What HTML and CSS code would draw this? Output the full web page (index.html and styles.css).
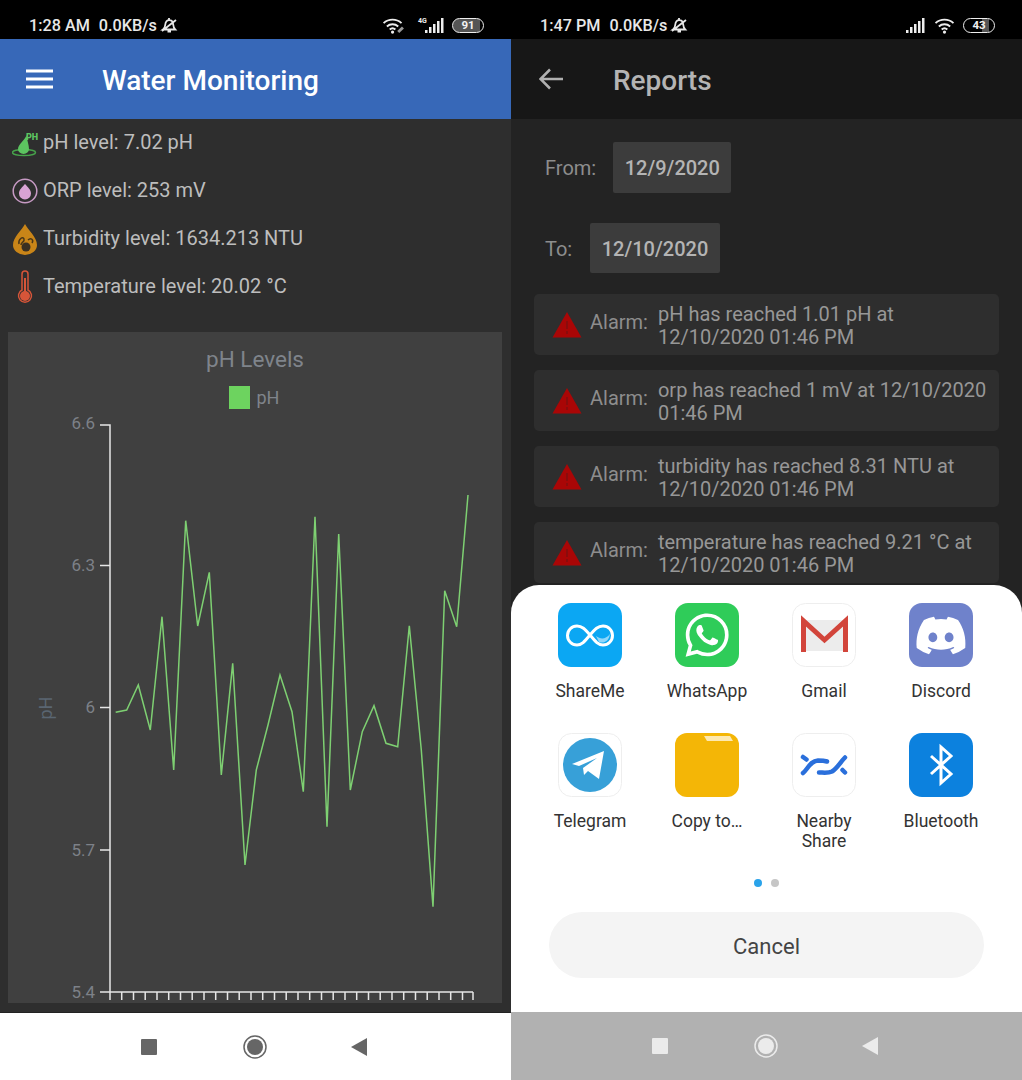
FILE: index.html
```html
<!DOCTYPE html>
<html>
  <head>
    <meta charset="UTF-8" />
    <title>Water Monitoring</title>
    <link rel="stylesheet" href="styles.css">
  </head>
  <body>
    <div class="screens">
      <!-- left phone: live readings -->
      <section class="phone">
        <div class="status-bar">
          <span class="status-time">1:28 AM</span>
          <span class="status-speed">0.0KB/s</span>
          <svg class="bell" viewBox="0 0 18 18"><path d="M3 13.5c1.5-1 2-2.5 2.2-4.5.3-3 1.800-4.800 4-4.800s3.800 1.600 4 4.300c.2 2.200.8 3.800 2 5zM7.500 15.500h3.500M9 2v2M2 15 16 4" /></svg>
          <div class="status-right">
            <svg class="wifi wifi-left" viewBox="0 0 24 18"><path d="M1.500 6.500a14 14 0 0 1 19 0M5 10a9 9 0 0 1 12 0M8 13.200a4.500 4.500 0 0 1 6 0" /><circle cx="11" cy="16" r="1.700" class="fill" /><path class="thin" d="M17 16l5-5" /></svg>
            <svg class="signal-4g" viewBox="0 0 27 17"><text x="1" y="6" class="tiny">4G</text><rect x="8" y="13" width="2.500" height="3" /><rect x="12" y="10" width="2.500" height="6" /><rect x="16" y="7" width="2.500" height="9" /><rect x="20" y="4" width="2.500" height="12" /><rect x="24" y="1" width="2.500" height="15" /></svg>
            <span class="battery">91</span>
          </div>
        </div>
        <header class="app-bar app-bar-blue">
          <svg class="menu-icon" viewBox="0 0 27 20"><path d="M0 2h27M0 10h27M0 18h27" /></svg>
          <h1>Water Monitoring</h1>
        </header>
        <main class="monitor">
          <div class="reading">
            <svg class="reading-icon" viewBox="0 0 26 26"><ellipse cx="12" cy="22.500" rx="11.500" ry="3" class="ph-ring" /><path class="ph-drop" d="M14.500 5c-1 5-8.500 9-8.500 14a5.500 5 0 0 0 11 0c0-4-2-9-2.500-14z" /><text x="14" y="10" class="ph-text">PH</text></svg>
            <span>pH level: 7.02 pH</span>
          </div>
          <div class="reading">
            <svg class="reading-icon" viewBox="0 0 26 26"><circle cx="13" cy="13" r="11.800" class="orp-ring" /><path class="orp-drop" d="M13 6c2.500 3 6 5.500 6 9.500a6 6 0 0 1-12 0C7 11.500 10.500 9 13 6z" /></svg>
            <span>ORP level: 253 mV</span>
          </div>
          <div class="reading">
            <svg class="reading-icon" viewBox="0 0 26 32"><path class="turb-drop" d="M13 1c3 6 12 13 12 21a12 10 0 0 1-24 0C1 14 10 7 13 1z" /><circle cx="14" cy="24" r="4.500" class="turb-dark" /><path class="turb-line" d="M7 21c-1-5 4-8 5-5s-3 3-3 6M16 17c3-3 6 0 4 3" /></svg>
            <span>Turbidity level: 1634.213 NTU</span>
          </div>
          <div class="reading">
            <svg class="reading-icon" viewBox="0 0 26 34"><path class="thermo-line" d="M10 20V4a3 3 0 0 1 6 0v16a6.500 6.500 0 1 1-6 0z" /><circle cx="13" cy="26" r="5" class="thermo-fill" /><rect x="12" y="8" width="2" height="16" class="thermo-fill" /></svg>
            <span>Temperature level: 20.02 °C</span>
          </div>

          <div class="chart-card">
            <div class="chart-title">pH Levels</div>
            <div class="chart-legend"><span class="legend-box"></span>pH</div>
            <svg class="chart" viewBox="8 410 494 593">
              <text x="52" y="708" class="axis-title" transform="rotate(-90 52 708)">pH</text>
              <g class="tick-labels">
                <text x="95" y="429">6.6</text>
                <text x="95" y="571">6.3</text>
                <text x="95" y="713">6</text>
                <text x="95" y="856">5.7</text>
                <text x="95" y="998">5.4</text>
              </g>
              <path class="axis" d="M100 425h10V992M100 565.500h10M100 707.500h10M100 850h10M100 992H473" />
              <path class="axis-ticks" d="M110 992v8M121.700 992v8M133.500 992v8M145.200 992v8M157 992v8M168.700 992v8M180.500 992v8M192.200 992v8M204 992v8M215.700 992v8M227.500 992v8M239.200 992v8M251 992v8M262.700 992v8M274.500 992v8M286.200 992v8M298 992v8M309.700 992v8M321.500 992v8M333.200 992v8M345 992v8M356.700 992v8M368.500 992v8M380.200 992v8M392 992v8M403.700 992v8M415.500 992v8M427.200 992v8M439 992v8M450.700 992v8M462.500 992v8M473 992v8" />
              <polyline class="ph-line" points="115.700,712.300 126.700,710 138.300,685 150.300,730 162,616.700 173.700,770 185.700,520.700 197.700,626 209.300,572.300 221.300,775 232.700,663.300 245,865 256.300,770 268,725 280,675 292,711.700 303.300,791.700 315,516.700 327,826.700 338.700,534 350.300,790 362.300,731.700 374,705.700 386,743.300 397.700,746.700 409.300,625.700 421.300,750 433,906.700 444.700,590.700 456.700,626.700 468,495" />
            </svg>
          </div>
        </main>
        <nav class="nav-bar">
          <svg class="nav-icon nav-first" viewBox="0 0 24 24"><rect x="4" y="4" width="16" height="16" rx="1" class="nav-fill" /></svg>
          <svg class="nav-icon" viewBox="0 0 24 24"><circle cx="12" cy="12" r="11" class="nav-ring" /><circle cx="12" cy="12" r="8" class="nav-fill" /></svg>
          <svg class="nav-icon" viewBox="0 0 24 24"><path d="M4 12 20 3v18z" class="nav-fill" /></svg>
        </nav>
      </section>

      <!-- right phone: reports with share sheet open -->
      <section class="phone phone-dim">
        <div class="status-bar">
          <span class="status-time">1:47 PM</span>
          <span class="status-speed">0.0KB/s</span>
          <svg class="bell" viewBox="0 0 18 18"><path d="M3 13.5c1.5-1 2-2.5 2.2-4.5.3-3 1.800-4.800 4-4.800s3.800 1.600 4 4.300c.2 2.200.8 3.800 2 5zM7.500 15.500h3.500M9 2v2M2 15 16 4" /></svg>
          <div class="status-right">
            <svg class="signal" viewBox="0 0 20 15"><rect x="0" y="12" width="2.500" height="3" /><rect x="4" y="9" width="2.500" height="6" /><rect x="8" y="6" width="2.500" height="9" /><rect x="12" y="3" width="2.500" height="12" /><rect x="16" y="0" width="2.500" height="15" /></svg>
            <svg class="wifi" viewBox="0 0 22 18"><path d="M1.500 6.500a14 14 0 0 1 19 0M5 10a9 9 0 0 1 12 0M8 13.200a4.500 4.500 0 0 1 6 0" /><circle cx="11" cy="16" r="1.700" class="fill" /></svg>
            <span class="battery battery-low">43</span>
          </div>
        </div>
        <header class="app-bar app-bar-dark">
          <svg class="back-icon" viewBox="0 0 24 22"><path d="M24 11H2M11 1.500 1.500 11l9.500 9.500" /></svg>
          <h1>Reports</h1>
        </header>
        <main class="reports">
          <div class="date-row">
            <span class="date-label">From:</span>
            <span class="date-btn">12/9/2020</span>
          </div>
          <div class="date-row date-row-to">
            <span class="date-label">To:</span>
            <span class="date-btn">12/10/2020</span>
          </div>
          <div class="alarm">
            <svg class="alarm-icon" viewBox="0 0 30 27"><path d="M15 1 29.500 26.500H.5z" /><path class="alarm-mark" d="M15 10v8M15 20v3" /></svg>
            <span class="alarm-label">Alarm:</span>
            <span class="alarm-text">pH has reached 1.01 pH at 12/10/2020 01:46 PM</span>
          </div>
          <div class="alarm">
            <svg class="alarm-icon" viewBox="0 0 30 27"><path d="M15 1 29.500 26.500H.5z" /><path class="alarm-mark" d="M15 10v8M15 20v3" /></svg>
            <span class="alarm-label">Alarm:</span>
            <span class="alarm-text">orp has reached 1 mV at 12/10/2020 01:46 PM</span>
          </div>
          <div class="alarm">
            <svg class="alarm-icon" viewBox="0 0 30 27"><path d="M15 1 29.500 26.500H.5z" /><path class="alarm-mark" d="M15 10v8M15 20v3" /></svg>
            <span class="alarm-label">Alarm:</span>
            <span class="alarm-text">turbidity has reached 8.31 NTU at 12/10/2020 01:46 PM</span>
          </div>
          <div class="alarm">
            <svg class="alarm-icon" viewBox="0 0 30 27"><path d="M15 1 29.500 26.500H.5z" /><path class="alarm-mark" d="M15 10v8M15 20v3" /></svg>
            <span class="alarm-label">Alarm:</span>
            <span class="alarm-text">temperature has reached 9.21 °C at 12/10/2020 01:46 PM</span>
          </div>
        </main>

        <div class="share-sheet">
          <div class="share-grid">
            <div class="share-item">
              <svg class="app-icon" viewBox="0 0 64 64"><rect width="64" height="64" rx="13" fill="#0ba7f3" /><path d="M32 32c-5-6-8-9-13-9a9.500 9.500 0 0 0 0 19c5 0 8-4 13-10s8-9 13-9a9.500 9.500 0 0 1 0 19c-5 0-8-4-13-10z" fill="none" stroke="#fff" stroke-width="3" /><path d="M38 33c5 4 10 3 14-2-1 7-6 10-11 8z" fill="#8fd6fa" /></svg>
              <span>ShareMe</span>
            </div>
            <div class="share-item">
              <svg class="app-icon" viewBox="0 0 64 64"><rect width="64" height="64" rx="13" fill="#2fcc59" /><g transform="translate(10.500 10.500) scale(1.800)"><path fill="#fff" d="M17.472 14.382c-.297-.149-1.758-.867-2.03-.967-.273-.099-.471-.148-.67.15-.197.297-.767.966-.94 1.164-.173.199-.347.223-.644.075-.297-.15-1.255-.463-2.39-1.475-.883-.788-1.48-1.761-1.653-2.059-.173-.297-.018-.458.13-.606.134-.133.298-.347.446-.52.149-.174.198-.298.298-.497.099-.198.05-.371-.025-.52-.075-.149-.669-1.612-.916-2.207-.242-.579-.487-.5-.669-.51-.173-.008-.371-.01-.57-.01-.198 0-.52.074-.792.372-.272.297-1.04 1.016-1.04 2.479 0 1.462 1.065 2.875 1.213 3.074.149.198 2.096 3.2 5.077 4.487.709.306 1.262.489 1.694.625.712.227 1.36.195 1.871.118.571-.085 1.758-.719 2.006-1.413.248-.694.248-1.289.173-1.413-.074-.124-.272-.198-.57-.347m-5.421 7.403h-.004a9.87 9.87 0 01-5.031-1.378l-.361-.214-3.741.982.998-3.648-.235-.374a9.86 9.86 0 01-1.51-5.26c.001-5.45 4.436-9.884 9.888-9.884 2.64 0 5.122 1.03 6.988 2.898a9.825 9.825 0 012.893 6.994c-.003 5.45-4.437 9.884-9.885 9.884m8.413-18.297A11.815 11.815 0 0012.05 0C5.495 0 .16 5.335.157 11.892c0 2.096.547 4.142 1.588 5.945L.057 24l6.305-1.654a11.882 11.882 0 005.683 1.448h.005c6.554 0 11.89-5.335 11.893-11.893a11.821 11.821 0 00-3.48-8.413z" /></g></svg>
              <span>WhatsApp</span>
            </div>
            <div class="share-item">
              <svg class="app-icon" viewBox="0 0 64 64"><rect x=".5" y=".5" width="63" height="63" rx="13" fill="#fff" stroke="#eee" /><path d="M11 17h43v31H11z" fill="#ececec" /><path d="M11.500 49V18l21 19 21-19v31" fill="none" stroke="#d2453b" stroke-width="5" /></svg>
              <span>Gmail</span>
            </div>
            <div class="share-item">
              <svg class="app-icon" viewBox="0 0 64 64"><rect width="64" height="64" rx="13" fill="#6f82cb" /><g transform="translate(7.500 8) scale(2.040)"><path fill="#fff" d="M20.317 4.37a19.791 19.791 0 0 0-4.885-1.515.074.074 0 0 0-.079.037c-.21.375-.444.864-.608 1.25a18.27 18.27 0 0 0-5.487 0 12.64 12.64 0 0 0-.617-1.25.077.077 0 0 0-.079-.037A19.736 19.736 0 0 0 3.677 4.37a.07.07 0 0 0-.032.027C.533 9.046-.32 13.58.099 18.057a.082.082 0 0 0 .031.057 19.9 19.9 0 0 0 5.993 3.03.078.078 0 0 0 .084-.028 14.09 14.09 0 0 0 1.226-1.994.076.076 0 0 0-.041-.106 13.107 13.107 0 0 1-1.872-.892.077.077 0 0 1-.008-.128 10.2 10.2 0 0 0 .372-.292.074.074 0 0 1 .077-.01c3.928 1.793 8.18 1.793 12.062 0a.074.074 0 0 1 .078.01c.12.098.246.198.373.292a.077.077 0 0 1-.006.127 12.299 12.299 0 0 1-1.873.892.077.077 0 0 0-.041.107c.36.698.772 1.362 1.225 1.993a.076.076 0 0 0 .084.028 19.839 19.839 0 0 0 6.002-3.03.077.077 0 0 0 .032-.054c.5-5.177-.838-9.674-3.549-13.66a.061.061 0 0 0-.031-.03zM8.020 15.33c-1.183 0-2.157-1.085-2.157-2.419 0-1.333.956-2.419 2.157-2.419 1.21 0 2.176 1.096 2.157 2.42 0 1.333-.956 2.418-2.157 2.418zm7.975 0c-1.183 0-2.157-1.085-2.157-2.419 0-1.333.955-2.419 2.157-2.419 1.21 0 2.176 1.096 2.157 2.42 0 1.333-.946 2.418-2.157 2.418Z" /></g></svg>
              <span>Discord</span>
            </div>
            <div class="share-item">
              <svg class="app-icon" viewBox="0 0 64 64"><rect x=".5" y=".5" width="63" height="63" rx="13" fill="#fff" stroke="#eee" /><circle cx="32" cy="32" r="27" fill="#37a0d8" /><path d="M14 31 46 18 41 46 30 38 26 42 25 35 39 25 21 33z" fill="#fff" /></svg>
              <span>Telegram</span>
            </div>
            <div class="share-item">
              <svg class="app-icon" viewBox="0 0 64 64"><rect width="64" height="64" rx="12" fill="#f4b606" /><path d="M29 3h26l3 5H32z" fill="#fde9b0" /></svg>
              <span>Copy to…</span>
            </div>
            <div class="share-item">
              <svg class="app-icon" viewBox="0 0 64 64"><rect x=".5" y=".5" width="63" height="63" rx="13" fill="#fff" stroke="#eee" /><path d="M11 40c5-4 7-12 15-12.500 3 0 6 0 9 1M27 39.500c4 0 9 1 13-1 5-3 8-9 13-14M11 24l3.500 2.500M50.500 37l2.500 2.500" fill="none" stroke="#2a6fdb" stroke-width="4.500" stroke-linecap="round" /></svg>
              <span>Nearby Share</span>
            </div>
            <div class="share-item">
              <svg class="app-icon" viewBox="0 0 64 64"><rect width="64" height="64" rx="13" fill="#0c81de" /><path d="M22 23 42 41 32 50V14l10 9-20 18" fill="none" stroke="#fff" stroke-width="3" /></svg>
              <span>Bluetooth</span>
            </div>
          </div>
          <div class="pager"><span class="dot dot-on"></span><span class="dot"></span></div>
          <div class="cancel-btn">Cancel</div>
        </div>

        <nav class="nav-bar nav-bar-dim">
          <svg class="nav-icon nav-first" viewBox="0 0 24 24"><rect x="4" y="4" width="16" height="16" rx="1" class="nav-fill" /></svg>
          <svg class="nav-icon" viewBox="0 0 24 24"><circle cx="12" cy="12" r="11" class="nav-ring" /><circle cx="12" cy="12" r="8" class="nav-fill" /></svg>
          <svg class="nav-icon" viewBox="0 0 24 24"><path d="M4 12 20 3v18z" class="nav-fill" /></svg>
        </nav>
      </section>
    </div>
  </body>
</html>
```
FILE: styles.css
```css
* {
  box-sizing: border-box;
}
body {
  margin: 0;
  background: #000;
  font-family: Roboto, "Liberation Sans", sans-serif;
}
.screens {
  display: flex;
  height: 1080px;
  overflow: hidden;
}
.phone {
  position: relative;
  display: flex;
  flex-direction: column;
  width: 511px;
  height: 1080px;
  overflow: hidden;
}

/* status bar */
.status-bar {
  display: flex;
  align-items: center;
  height: 39px;
  padding: 11px 27px 0 29px;
  background: #000;
  color: #e8e8e8;
  font-size: 16.2px;
  font-weight: 500;
  flex: none;
}
.status-speed {
  margin-left: 9px;
}
.bell {
  width: 18px;
  height: 18px;
  margin-left: 3px;
  fill: none;
  stroke: #e8e8e8;
  stroke-width: 1.8;
}
.status-right {
  display: flex;
  align-items: center;
  gap: 8px;
  margin-left: auto;
}
.wifi {
  width: 21px;
  height: 17px;
  fill: none;
  stroke: #eee;
  stroke-width: 2;
}
.wifi-left {
  width: 23px;
  margin-right: 4px;
}
.wifi .fill {
  fill: #eee;
  stroke: none;
}
.wifi .thin {
  stroke: #999;
  stroke-width: 3;
}
.signal,
.signal-4g {
  width: 20px;
  height: 15px;
  fill: #eee;
}
.signal-4g {
  width: 27px;
  height: 17px;
}
.tiny {
  font-size: 7px;
  font-weight: 700;
}
.battery {
  width: 32px;
  height: 15px;
  border: 1.5px solid #eee;
  border-radius: 8px;
  background: linear-gradient(90deg, #555 90%, #000 90%);
  color: #f2f2f2;
  font-size: 11.5px;
  font-weight: 700;
  line-height: 12px;
  text-align: center;
}
.battery-low {
  background: linear-gradient(90deg, #000 60%, #555 60%, #555 85%, #000 85%);
}

/* app bars */
.app-bar {
  display: flex;
  align-items: center;
  height: 80px;
  flex: none;
}
.app-bar h1 {
  margin: 0;
  padding-top: 3px;
  font-size: 28px;
  font-weight: 500;
}
.app-bar-blue {
  padding-left: 26px;
  background: #3768b8;
  color: #fff;
}
.menu-icon {
  width: 27px;
  height: 20px;
  margin-right: 49px;
  fill: none;
  stroke: #fff;
  stroke-width: 3;
}
.app-bar-dark {
  padding-left: 28px;
  background: #171717;
  color: #b4b4b4;
}
.back-icon {
  width: 24px;
  height: 22px;
  margin-right: 50px;
  fill: none;
  stroke: #b0b0b0;
  stroke-width: 2.500;
}

/* readings */
.monitor {
  display: flex;
  flex-direction: column;
  flex: 1;
  min-height: 0;
  background: #2e2e2e;
}
.reading {
  display: flex;
  align-items: center;
  gap: 5px;
  height: 48px;
  padding-left: 12px;
  color: #bdbdbd;
  font-size: 20px;
  flex: none;
}
.reading span {
  margin-bottom: 2px;
}
.reading-icon {
  width: 26px;
  height: 34px;
}
.ph-ring {
  fill: none;
  stroke: #46a24a;
  stroke-width: 1.500;
}
.ph-drop {
  fill: #5cc460;
}
.ph-text {
  fill: #5cc460;
  font-size: 9px;
  font-weight: 900;
}
.orp-ring {
  fill: none;
  stroke: #c79ac4;
  stroke-width: 1.500;
}
.orp-drop {
  fill: #d9a3d4;
}
.turb-drop {
  fill: #c98518;
}
.turb-dark {
  fill: #3a3022;
}
.turb-line {
  fill: none;
  stroke: #4a3718;
  stroke-width: 1.500;
}
.thermo-line {
  fill: none;
  stroke: #d65539;
  stroke-width: 1.500;
}
.thermo-fill {
  fill: #d65539;
}

/* chart */
.chart-card {
  display: flex;
  flex-direction: column;
  flex: 1;
  min-height: 0;
  margin: 21px 9px 9px 8px;
  background: #404040;
  color: #7f848b;
}
.chart-title {
  height: 44px;
  padding-top: 13px;
  font-size: 22.5px;
  line-height: 28px;
  text-align: center;
  flex: none;
}
.chart-legend {
  display: flex;
  align-items: center;
  justify-content: center;
  gap: 7px;
  height: 34px;
  padding: 9px 2px 0 0;
  font-size: 18px;
  flex: none;
}
.legend-box {
  width: 21px;
  height: 23px;
  background: #6dd35f;
}
.chart {
  display: block;
  width: 494px;
  height: 593px;
  flex: none;
}
.tick-labels text {
  fill: #7d8188;
  font-size: 17px;
  text-anchor: end;
}
.axis-title {
  fill: #5a6672;
  font-size: 18px;
  text-anchor: middle;
}
.axis,
.axis-ticks {
  fill: none;
  stroke: #e6e6e6;
  stroke-width: 1.500;
}
.ph-line {
  fill: none;
  stroke: #7ed072;
  stroke-width: 1.500;
}

/* nav bar */
.nav-bar {
  display: flex;
  align-items: center;
  justify-content: center;
  gap: 80px;
  height: 68px;
  padding-right: 4px;
  background: #fff;
  border-top: 1px solid #222;
  flex: none;
}
.nav-first {
  margin-right: 2px;
}
.nav-icon {
  width: 24px;
  height: 24px;
}
.nav-fill {
  fill: #666;
}
.nav-ring {
  fill: none;
  stroke: #666;
  stroke-width: 1.500;
}
.nav-bar-dim {
  background: #b1b1b1;
  border-top: 0;
}
.nav-bar-dim .nav-fill {
  fill: #ebebeb;
}
.nav-bar-dim .nav-ring {
  stroke: #ebebeb;
}

/* reports */
.reports {
  flex: 1;
  min-height: 0;
  padding: 23px 23px 0;
  background: #232323;
  color: #8d8d8d;
  overflow: hidden;
}
.date-row {
  display: flex;
  align-items: center;
  gap: 17px;
  height: 51px;
  margin-bottom: 30px;
  padding-left: 11px;
  font-size: 20px;
}
.date-row-to {
  gap: 18px;
  height: 50px;
  margin-bottom: 21px;
}
.date-row-to .date-label {
  margin-top: 2px;
}
.date-row-to .date-btn {
  padding-top: 2px;
}
.date-btn {
  display: flex;
  align-items: center;
  height: 100%;
  padding: 0 11.5px;
  background: #3c3c3c;
  border-radius: 2px;
  color: #b4b4b4;
  font-weight: 500;
}
.alarm {
  display: flex;
  align-items: center;
  height: 61px;
  margin-bottom: 15px;
  padding: 0 10px 0 18px;
  background: #2e2e2e;
  border-radius: 5px;
  font-size: 20px;
  line-height: 23px;
}
.alarm-icon {
  width: 30px;
  height: 27px;
  margin-right: 8px;
  fill: #a90606;
  flex: none;
}
.alarm-mark {
  fill: none;
  stroke: #8a0c0c;
  stroke-width: 2;
}
.alarm-label {
  margin: 0 10px 5px 0;
  flex: none;
}
.alarm-text {
  margin-top: 2px;
  color: #979797;
}

/* share sheet */
.share-sheet {
  position: absolute;
  left: 0;
  right: 0;
  bottom: 68px;
  height: 427px;
  padding: 18px 24px 0 22px;
  background: #fff;
  border-radius: 28px 28px 0 0;
  color: #333;
}
.share-grid {
  display: grid;
  grid-template-columns: repeat(4, 117px);
  grid-auto-rows: 130px;
  justify-content: center;
}
.share-item {
  display: flex;
  flex-direction: column;
  align-items: center;
  font-size: 17.5px;
  line-height: 20px;
  text-align: center;
}
.share-item span {
  width: 90px;
  margin-top: 14px;
}
.app-icon {
  width: 64px;
  height: 64px;
  flex: none;
}
.pager {
  display: flex;
  justify-content: center;
  gap: 9px;
  margin: 16px -2px 0 0;
}
.dot {
  width: 8px;
  height: 8px;
  border-radius: 50%;
  background: #c6c6c6;
}
.dot-on {
  background: #2aa3ea;
}
.cancel-btn {
  display: flex;
  align-items: center;
  justify-content: center;
  height: 66px;
  margin: 25px 14px 0 16px;
  padding-top: 2px;
  background: #f4f4f4;
  border-radius: 33px;
  color: #444;
  font-size: 22px;
}
```
